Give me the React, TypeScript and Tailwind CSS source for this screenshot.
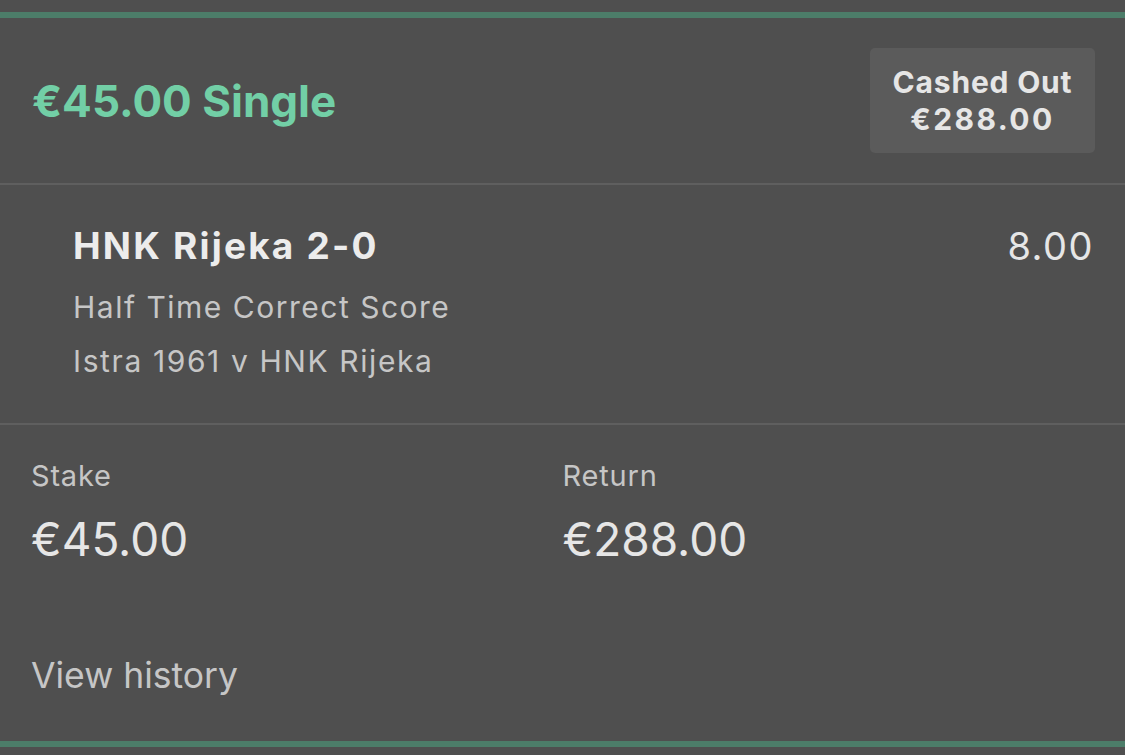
import React from "react";

export default function App() {
  return (
    <div
      className="w-[1125px] h-[755px] bg-[#4f4f4f] overflow-hidden flex flex-col"
      style={{ fontFamily: "Inter, 'Noto Sans', sans-serif" }}
    >
      <div className="h-[12px] shrink-0" />
      <div className="h-[6px] bg-[#4c7d69] shrink-0" />
      {/* header */}
      <div className="h-[165px] shrink-0 flex items-center justify-between pl-[32px] pr-[30px]">
        <div className="text-[44px] font-bold text-[#72cfa6] leading-[52px]">€45.00 Single</div>
        <div className="w-[225px] h-[105px] rounded-[5px] bg-[#5b5b5b] flex flex-col items-center justify-center leading-[37px] font-bold text-[#e6e6e6] text-[30px]">
          <div className="tracking-[0.8px]">Cashed Out</div>
          <div className="tracking-[2.4px]">€288.00</div>
        </div>
      </div>
      <div className="h-[2px] bg-[#5f5f5f] shrink-0" />
      {/* selection */}
      <div className="h-[238px] shrink-0 flex items-start justify-between pl-[73px] pr-[32px] pt-[39px]">
        <div className="flex flex-col">
          <div className="text-[37px] font-bold text-[#ececec] leading-[44px] tracking-[2.2px]">HNK Rijeka 2-0</div>
          <div className="text-[30px] text-[#c6c6c6] leading-[54px] mt-[12px] tracking-[1.5px]">Half Time Correct Score</div>
          <div className="text-[30px] text-[#c6c6c6] leading-[54px] tracking-[1.6px]">Istra 1961 v HNK Rijeka</div>
        </div>
        <div className="text-[38px] text-[#e6e6e6] leading-[44px] tracking-[1.5px] mr-[-1px]">8.00</div>
      </div>
      <div className="h-[2px] bg-[#5f5f5f] shrink-0" />
      {/* stake/return */}
      <div className="grid grid-cols-2 px-[31px] pt-[34px]">
        <div className="flex flex-col">
          <div className="text-[29px] text-[#c6c6c6] leading-[34px] tracking-[0.8px]">Stake</div>
          <div className="text-[46px] text-[#e6e6e6] leading-[52px] mt-[20px]">€45.00</div>
        </div>
        <div className="flex flex-col">
          <div className="text-[29px] text-[#c6c6c6] leading-[34px] tracking-[0.8px]">Return</div>
          <div className="text-[46px] text-[#e6e6e6] leading-[52px] mt-[20px]">€288.00</div>
        </div>
      </div>
      <div className="px-[31px] mt-[89px] text-[35.5px] text-[#c6c6c6] leading-[44px]">View history</div>
      <div className="flex-1" />
      <div className="h-[6px] bg-[#4c7d69] shrink-0 mb-[8px]" />
    </div>
  );
}
